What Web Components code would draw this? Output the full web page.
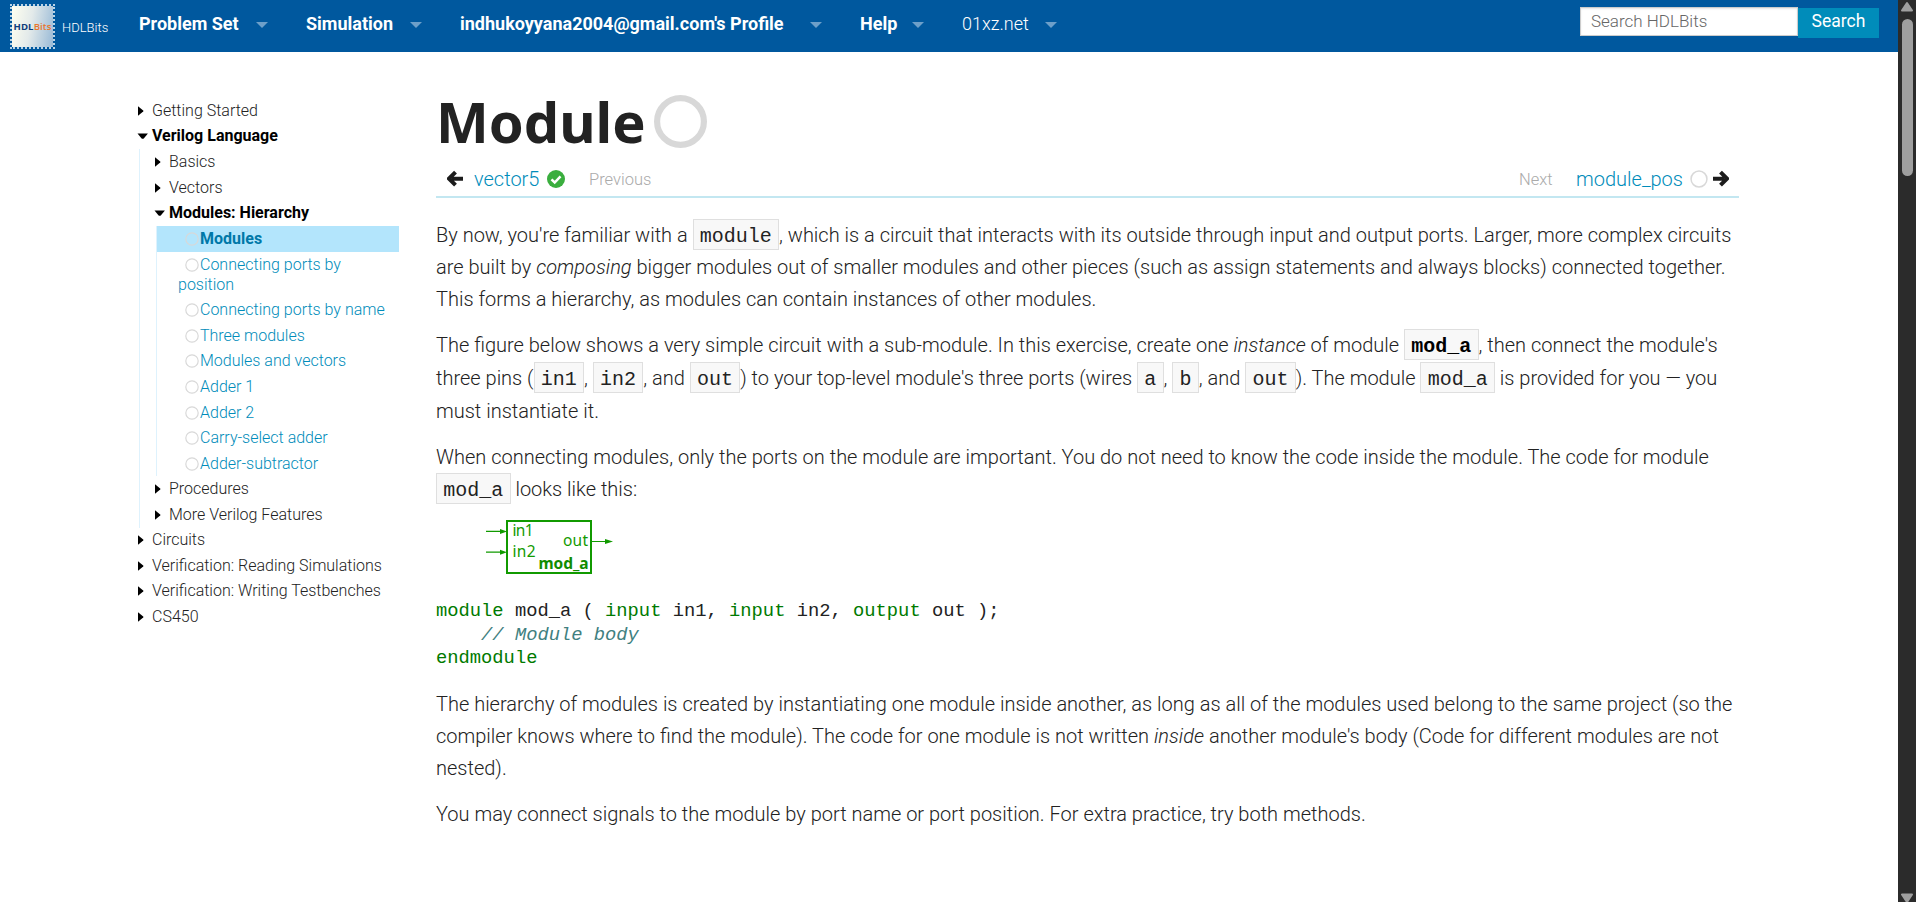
<!DOCTYPE html>
<html lang="en"><head><meta charset="utf-8"><title>Module - HDLBits</title>
<style>
html,body{margin:0;height:100%;overflow:hidden;background:#fff}
body{font-family:Roboto,"Liberation Sans",sans-serif;font-weight:300;color:#222}
</style></head><body>
<hdl-app></hdl-app>
<script>
const define=(name,html,init)=>customElements.define(name,class extends HTMLElement{
  constructor(){super();this.attachShadow({mode:'open'});}
  connectedCallback(){this.shadowRoot.innerHTML=typeof html==='function'?html(this):html;if(init)init(this);}
});
const a=(e,n,d='')=>e.getAttribute(n)??d;

define('status-ring',e=>`<style>:host{display:inline-block;flex:none}svg{display:block}</style>
<svg width="${a(e,'size')}" height="${a(e,'size')}" viewBox="0 0 24 24"><circle cx="12" cy="12" r="10.6" fill="none" stroke="#d8d8d8" stroke-width="${a(e,'stroke','2.6')}"/></svg>`);

define('nav-item',e=>`<style>:host{display:flex;align-items:center;margin-right:38px;font-size:18px;line-height:24px;color:#fff;font-weight:${a(e,'weight','700')}}
span{display:block;width:${a(e,'w')}px;white-space:nowrap;letter-spacing:${a(e,'ls','0')}px}
i{display:block;margin-left:13px;border:6px solid transparent;border-top-color:#6d9fc9;border-bottom:0;margin-top:1px}</style><span><slot></slot></span><i></i>`);

define('site-logo',`<style>:host{display:flex;align-items:center;width:129px;box-sizing:border-box;padding-left:10px;color:#fff;font-size:13px}
.chip{width:41px;height:41px;border:2px dotted #b9d3e6;background:linear-gradient(100deg,#fffff0,#e3eaea 45%,#98b9d6) content-box;display:flex;align-items:center;justify-content:center;font:700 9.6px "Open Sans",sans-serif;color:#123f7c;letter-spacing:.1px}
.chip b{font-weight:600;color:#e8762c}.t{margin:3px 0 0 7px}</style><div class="chip"><span>HDL<b>Bits</b></span></div><span class="t">HDLBits</span>`);

define('search-box',`<style>:host{display:flex;margin:7px 19px 0 auto;align-items:flex-start;font-size:18px}
.in{box-sizing:border-box;width:218px;height:29px;background:#fff;border:1px solid #ccc;box-shadow:inset 0 1px 2px rgba(0,0,0,.1);color:#666;padding-left:10px;line-height:27px;font-size:17px}
.go{margin-top:1px;width:81px;height:30px;line-height:27px;background:#008cba;color:#fff;text-align:center;font-weight:400;font-size:17.5px}</style>
<div class="in">Search HDLBits</div><div class="go">Search</div>`);

define('top-bar',`<style>:host{display:flex;height:52px;background:#00589e}
nav{display:flex;align-items:center;height:48px;padding-left:10px}</style>
<site-logo></site-logo><nav><nav-item w="104">Problem Set</nav-item><nav-item w="91">Simulation</nav-item><nav-item w="337">indhukoyyana2004@gmail.com's Profile</nav-item><nav-item w="39">Help</nav-item><nav-item w="70" weight="300">01xz.net</nav-item></nav><search-box></search-box>`);

define('tree-node',e=>{const open=e.hasAttribute('open');return `<style>:host{display:block;font-size:16px;line-height:20px}
.row{display:flex;align-items:center;height:25.6px;color:${open?'#000':'#222'};font-weight:${open?700:300};white-space:nowrap;letter-spacing:${a(e,'ls','0')}px}
svg{width:12px;height:12px;margin-right:3px;flex:none}
.kids{display:block;margin-left:2px;border-left:1px solid #def2fd;padding-left:14px}</style>
<div class="row"><svg viewBox="0 0 12 12"><path fill="#000" d="${open?'M.5 3.4h10.4L7 8.2q-1.3 1-2.6 0z':'M1 1.2L6.2 5.4q.6.6 0 1.200L1 10.800z'}"/></svg><span>${a(e,'label')}</span></div>${open?'<div class="kids"><slot></slot></div>':''}`});

define('tree-leaf',e=>`<style>:host{display:block;font-size:16px;line-height:20px;color:#008cba;margin-left:-14px;padding:3px 0 2.600px 21px;width:221px;letter-spacing:${a(e,'ls','0')}px}
:host([current]){background:#b3e5fc;font-weight:700;color:#0078a8}
status-ring{margin:0 1px 0 7px;vertical-align:-2px}</style><status-ring size="14" stroke="2"></status-ring><slot></slot>`);

define('side-tree',`<style>:host{display:block;width:262px;padding:46px 0 0 137px;flex:none}</style>
<tree-node label="Getting Started"></tree-node>
<tree-node label="Verilog Language" open><tree-node label="Basics"></tree-node><tree-node label="Vectors"></tree-node>
<tree-node label="Modules: Hierarchy" open><tree-leaf current>Modules</tree-leaf><tree-leaf>Connecting ports by<br>position</tree-leaf><tree-leaf>Connecting ports by name</tree-leaf><tree-leaf>Three modules</tree-leaf><tree-leaf>Modules and vectors</tree-leaf><tree-leaf>Adder 1</tree-leaf><tree-leaf>Adder 2</tree-leaf><tree-leaf>Carry-select adder</tree-leaf><tree-leaf>Adder-subtractor</tree-leaf></tree-node>
<tree-node label="Procedures"></tree-node><tree-node label="More Verilog Features"></tree-node></tree-node>
<tree-node label="Circuits"></tree-node><tree-node label="Verification: Reading Simulations"></tree-node><tree-node label="Verification: Writing Testbenches"></tree-node><tree-node label="CS450"></tree-node>`);

define('code-chip',`<style>:host{display:inline-block;box-sizing:border-box;height:31px;border:1px solid #dfdfdf;background:#f8f8f8;padding:0 6.250px;font:20px/33px "Liberation Mono",monospace;color:#222;letter-spacing:0;vertical-align:baseline;margin:-4px 0}
:host([bold]){font-weight:700;color:#000}</style><slot></slot>`);

define('text-line',e=>`<style>:host{display:block;height:${a(e,'h','32')}px;line-height:${a(e,'h','32')}px;white-space:nowrap;letter-spacing:${a(e,'ls','0')}px}</style><slot></slot>`);
define('text-block',e=>`<style>:host{display:block;font-size:20px;margin-bottom:14px}</style><slot></slot>`);

const ARROW='M1 8.700h11M8.500 2.200L15 8.700l-6.500 6.500';
define('pager-bar',`<style>:host{display:flex;align-items:center;height:35px;border-bottom:2px solid #c3e7f1;padding:0 10px 0 11px;font-size:20px;line-height:34px}
svg{flex:none;display:block}.l{color:#008cba}.m{font-size:16.500px;color:#aaa;margin-top:2px}</style>
<svg width="17" height="18" viewBox="0 0 17 18"><path d="${ARROW}" transform="matrix(-1 0 0 1 17 0)" fill="none" stroke="#1c1c1c" stroke-width="4"/></svg>
<span class="l" style="margin-left:10px;width:66px">vector5</span>
<svg style="margin-left:7px" width="18" height="18" viewBox="0 0 18 18"><circle cx="9" cy="9" r="9" fill="#3aae3e"/><path d="M4.500 9.300l3.200 3.200 5.800-6.200" fill="none" stroke="#fff" stroke-width="2.500"/></svg>
<span class="m" style="margin-left:24px">Previous</span>
<span class="m" style="margin-left:auto;width:33px">Next</span><span class="l" style="margin-left:24px;width:107px">module_pos</span>
<status-ring size="18" stroke="2" style="margin:0 4px 0 7px"></status-ring>
<svg width="17" height="18" viewBox="0 0 17 18"><path d="${ARROW}" fill="none" stroke="#1c1c1c" stroke-width="4"/></svg>`);

define('module-figure',`<style>:host{display:block;margin:0 0 0 50px}svg{display:block}text{font-family:"Noto Sans","Open Sans",sans-serif;font-size:15.500px;fill:#119a00;font-weight:400}.b{font-weight:700;fill:#118c00}</style>
<svg width="128" height="54" viewBox="486 526 128 54"><g stroke="#119a00" fill="none"><rect x="507" y="527" width="84" height="52" stroke-width="2"/><path d="M486 537.400h16M486 558.200h16M592 547.500h16" stroke-width="1.200"/></g>
<path fill="#119a00" d="M500 534.900l7 2.500-7 2.500zM500 555.700l7 2.500-7 2.500zM605 545l8 2.500-8 2.500z"/>
<text x="512.500" y="541.500" textLength="21">in1</text><text x="512.500" y="562.500" textLength="23">in2</text><text x="563" y="551.800" textLength="25">out</text><text class="b" x="538.500" y="574.500" textLength="50">mod_a</text></svg>`);

define('verilog-code',`<style>:host{display:block;font:300 18.800px/23.600px "Liberation Mono",monospace;color:#222;white-space:pre;margin:0}b{color:#007a00}i{color:#408080}</style><b>module</b> mod_a ( <b>input</b> in1, <b>input</b> in2, <b>output</b> out );
    <i>// Module body</i>
<b>endmodule</b>`);

define('article-body',`<style>:host{display:block;width:1303px;margin-left:37px}
h1{display:flex;align-items:center;margin:0;height:65px;padding-top:37px;font:700 56px/65px "Noto Sans","Open Sans",sans-serif;color:#222}
h1 span{width:218px;padding-left:0}
i{font-style:italic}</style>
<h1><span>Module</span><status-ring size="53" stroke="2.800"></status-ring></h1>
<pager-bar style="margin-top:7px"></pager-bar>
<text-block style="margin-top:21px"><text-line>By now, you're familiar with a <code-chip>module</code-chip>, which is a circuit that interacts with its outside through input and output ports. Larger, more complex circuits</text-line>
<text-line>are built by <i>composing</i> bigger modules out of smaller modules and other pieces (such as assign statements and always blocks) connected together.</text-line>
<text-line>This forms a hierarchy, as modules can contain instances of other modules.</text-line></text-block>
<text-block><text-line h="33">The figure below shows a very simple circuit with a sub-module. In this exercise, create one <i>instance</i> of module <code-chip bold>mod_a</code-chip>, then connect the module's</text-line>
<text-line h="33">three pins (<code-chip>in1</code-chip>, <code-chip>in2</code-chip>, and <code-chip>out</code-chip>) to your top-level module's three ports (wires <code-chip>a</code-chip>, <code-chip>b</code-chip>, and <code-chip>out</code-chip>). The module <code-chip>mod_a</code-chip> is provided for you — you</text-line>
<text-line>must instantiate it.</text-line></text-block>
<text-block><text-line>When connecting modules, only the ports on the module are important. You do not need to know the code inside the module. The code for module</text-line>
<text-line h="33"><code-chip>mod_a</code-chip> looks like this:</text-line></text-block>
<module-figure></module-figure>
<verilog-code style="margin:26px 0 17px"></verilog-code>
<text-block><text-line>The hierarchy of modules is created by instantiating one module inside another, as long as all of the modules used belong to the same project (so the</text-line>
<text-line>compiler knows where to find the module). The code for one module is not written <i>inside</i> another module's body (Code for different modules are not</text-line>
<text-line>nested).</text-line></text-block>
<text-block><text-line>You may connect signals to the module by port name or port position. For extra practice, try both methods.</text-line></text-block>`);

define('scroll-rail',`<style>:host{display:flex;flex-direction:column;align-items:center;width:18px;height:902px;background:#2b2b2b}
svg{display:block;flex:none}.thumb{width:11px;height:157px;border-radius:6px;background:#9f9f9f;margin:7px 0 auto 1px}</style>
<svg width="14" height="12" viewBox="0 0 14 12"><path d="M7 3l5 7.500H2z" fill="#9f9f9f" stroke="#9f9f9f" stroke-linejoin="round" stroke-width="2"/></svg><div class="thumb"></div>
<svg width="14" height="9" viewBox="0 0 14 9"><path d="M2 1.500h10L7 9z" fill="#9f9f9f" stroke="#9f9f9f" stroke-linejoin="round" stroke-width="2"/></svg>`);

define('hdl-app',`<style>:host{display:grid;grid-template-columns:1898px 18px;height:902px;overflow:hidden}.main{display:flex;align-items:flex-start}</style>
<div><top-bar></top-bar><div class="main"><side-tree></side-tree><article-body></article-body></div></div><scroll-rail></scroll-rail>`);
</script></body></html>
